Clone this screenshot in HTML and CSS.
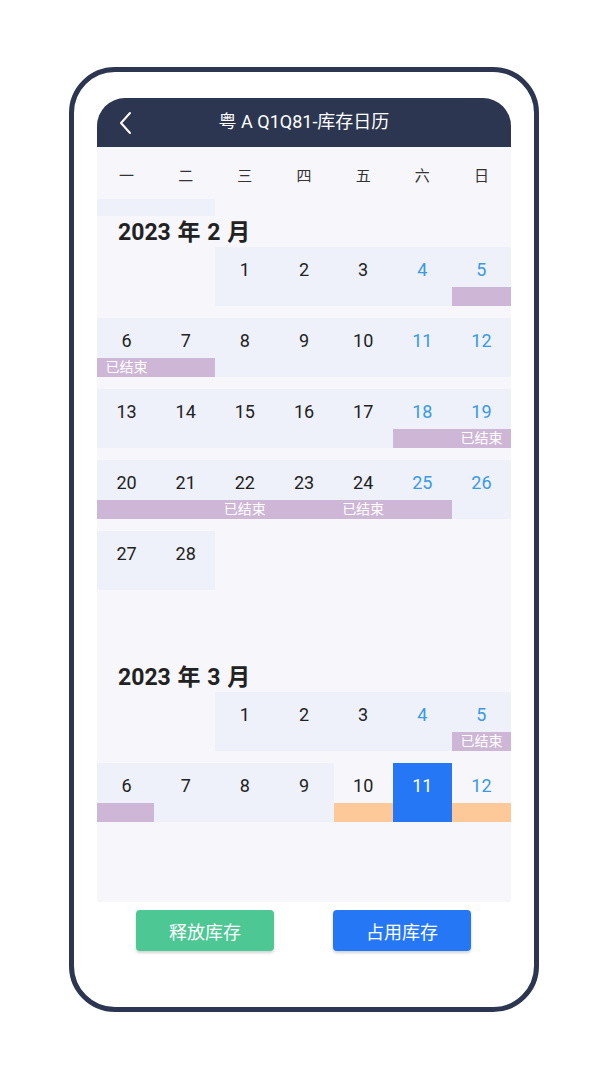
FILE: index.html
```html
<!DOCTYPE html>
<html lang="zh-CN">
<head>
<meta charset="utf-8">
<title>库存日历</title>
<link rel="stylesheet" href="styles.css">
</head>
<body>
<div class="phone">
  <div class="screen">
    <div class="topbar">
      <svg class="back" width="14" height="24" viewBox="0 0 14 24"><polyline points="11,2 2,12 11,22" fill="none" stroke="#fff" stroke-width="2" stroke-linecap="round" stroke-linejoin="round"/></svg>
      <div class="title">粤 A Q1Q81-库存日历</div>
    </div>
    <div class="calendar">
      <div class="weekdays">
        <span>一</span><span>二</span><span>三</span><span>四</span><span>五</span><span>六</span><span>日</span>
      </div>
      <div class="tail">
        <div class="cell-bg"></div><div class="cell-bg"></div>
      </div>

      <div class="month-title">2023 年 2 月</div>
      <div class="month">
        <div class="week">
          <div class="day empty"></div>
          <div class="day empty"></div>
          <div class="day"><span class="num">1</span></div>
          <div class="day"><span class="num">2</span></div>
          <div class="day"><span class="num">3</span></div>
          <div class="day"><span class="num wk">4</span></div>
          <div class="day"><span class="num wk">5</span><div class="bar purple"></div></div>
        </div>
        <div class="week">
          <div class="day"><span class="num">6</span><div class="bar purple">已结束</div></div>
          <div class="day"><span class="num">7</span><div class="bar purple"></div></div>
          <div class="day"><span class="num">8</span></div>
          <div class="day"><span class="num">9</span></div>
          <div class="day"><span class="num">10</span></div>
          <div class="day"><span class="num wk">11</span></div>
          <div class="day"><span class="num wk">12</span></div>
        </div>
        <div class="week">
          <div class="day"><span class="num">13</span></div>
          <div class="day"><span class="num">14</span></div>
          <div class="day"><span class="num">15</span></div>
          <div class="day"><span class="num">16</span></div>
          <div class="day"><span class="num">17</span></div>
          <div class="day"><span class="num wk">18</span><div class="bar purple"></div></div>
          <div class="day"><span class="num wk">19</span><div class="bar purple">已结束</div></div>
        </div>
        <div class="week">
          <div class="day"><span class="num">20</span><div class="bar purple"></div></div>
          <div class="day"><span class="num">21</span><div class="bar purple"></div></div>
          <div class="day"><span class="num">22</span><div class="bar purple">已结束</div></div>
          <div class="day"><span class="num">23</span><div class="bar purple"></div></div>
          <div class="day"><span class="num">24</span><div class="bar purple">已结束</div></div>
          <div class="day"><span class="num wk">25</span><div class="bar purple"></div></div>
          <div class="day"><span class="num wk">26</span></div>
        </div>
        <div class="week">
          <div class="day"><span class="num">27</span></div>
          <div class="day"><span class="num">28</span></div>
          <div class="day empty"></div>
          <div class="day empty"></div>
          <div class="day empty"></div>
          <div class="day empty"></div>
          <div class="day empty"></div>
        </div>
        <div class="week"></div>
      </div>

      <div class="month-title">2023 年 3 月</div>
      <div class="month">
        <div class="week">
          <div class="day empty"></div>
          <div class="day empty"></div>
          <div class="day"><span class="num">1</span></div>
          <div class="day"><span class="num">2</span></div>
          <div class="day"><span class="num">3</span></div>
          <div class="day"><span class="num wk">4</span></div>
          <div class="day"><span class="num wk">5</span><div class="bar purple">已结束</div></div>
        </div>
        <div class="week">
          <div class="day"><span class="num">6</span><div class="bar purple short"></div></div>
          <div class="day"><span class="num">7</span></div>
          <div class="day"><span class="num">8</span></div>
          <div class="day"><span class="num">9</span></div>
          <div class="day empty"><span class="num">10</span><div class="bar orange"></div></div>
          <div class="day selected"><span class="num">11</span></div>
          <div class="day empty"><span class="num wk">12</span><div class="bar orange"></div></div>
        </div>
      </div>
    </div>
    <div class="actions">
      <button class="btn green">释放库存</button>
      <button class="btn blue">占用库存</button>
    </div>
  </div>
</div>
</body>
</html>
```

FILE: styles.css
```css
* { box-sizing: border-box; }

body {
  margin: 0;
  background: #ffffff;
  font-family: Roboto, "Noto Sans CJK SC", sans-serif;
  color: #222;
}

.phone {
  margin: 67px 0 0 69px;
  width: 470px;
  height: 945px;
  border: 5px solid #2c3650;
  border-radius: 46px;
  padding: 26px 23px 0;
  background: #fff;
}

.screen {
  display: flex;
  flex-direction: column;
}

.topbar {
  height: 49px;
  background: #2c3650;
  border-radius: 28px 28px 0 0;
  display: flex;
  align-items: center;
  justify-content: center;
  position: relative;
}

.back {
  position: absolute;
  left: 22px;
  top: 13px;
}

.title {
  color: #fff;
  font-size: 18px;
  line-height: 24px;
  margin-top: -1px;
}

.calendar {
  height: 755px;
  background: #f6f6fb;
  overflow: hidden;
}

.weekdays {
  height: 52px;
  display: grid;
  grid-template-columns: repeat(7, 1fr);
  align-items: center;
  font-size: 15px;
  color: #333;
  text-align: center;
}

.weekdays span {
  margin-top: 2px;
}

.tail {
  height: 17px;
  display: grid;
  grid-template-columns: repeat(7, 1fr);
}

.cell-bg {
  background: #eef1f9;
}

.month-title {
  height: 31px;
  padding: 2px 0 0 21px;
  font-size: 23px;
  line-height: 30px;
  font-weight: 700;
  color: #222;
  word-spacing: 1px;
}

.month {
  display: flex;
  flex-direction: column;
  gap: 12px;
}

.week {
  height: 59px;
  display: grid;
  grid-template-columns: repeat(7, 1fr);
}

.day {
  background: #eef1f9;
  display: flex;
  flex-direction: column;
  align-items: center;
  height: 59px;
}

.day.empty {
  background: transparent;
}

.day.selected {
  background: #2677f5;
}

.num {
  margin-top: 10px;
  font-size: 18px;
  line-height: 26px;
  color: #222;
}

.num.wk {
  color: #3a9ae2;
}

.selected .num {
  color: #fff;
}

.bar {
  margin-top: auto;
  height: 19px;
  width: 100%;
  font-size: 14px;
  line-height: 19px;
  color: #fff;
  text-align: center;
}

.bar.purple {
  background: #ceb6d6;
}

.bar.orange {
  background: #fec999;
}

.bar.short {
  width: 57px;
  align-self: flex-start;
}

.actions {
  display: flex;
  justify-content: space-between;
  padding: 8px 40px 0 39px;
}

.btn {
  width: 138px;
  height: 41px;
  border: none;
  border-radius: 4px;
  color: #fff;
  font-family: Roboto, "Noto Sans CJK SC", sans-serif;
  font-size: 18px;
  box-shadow: 0 2px 3px rgba(0, 0, 0, 0.18);
}

.btn.green { background: #4dc793; }
.btn.blue { background: #2677f5; }
```
